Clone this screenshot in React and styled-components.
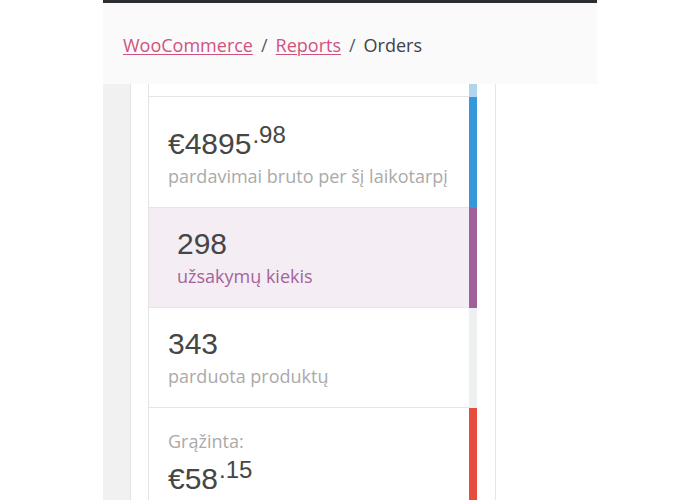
import styled, { createGlobalStyle } from 'styled-components';

const GlobalStyle = createGlobalStyle`
  body {
    margin: 0;
    background: #ffffff;
  }
`

const Page = styled.div`
  width: 700px;
  height: 500px;
  overflow: hidden;
  display: flex;
  padding-left: 103px;
  box-sizing: border-box;
`

const Frame = styled.div`
  width: 494px;
  display: flex;
  flex-direction: column;
`

const TopBar = styled.div`
  flex-shrink: 0;
  height: 3px;
  background: #2a2e32;
`

const Header = styled.div`
  flex-shrink: 0;
  height: 81px;
  box-sizing: border-box;
  padding: 30px 0 0 20px;
  background: #fafafa;
  font-family: "Open Sans", "Noto Sans", sans-serif;
  font-size: 18px;
  line-height: 24px;
  color: #555d66;
`

const Crumb = styled.a`
  color: #d1527f;
  text-decoration: underline;
  text-underline-offset: 2px;
  text-decoration-thickness: 1px;
`

const Sep = styled.span`
  margin: 0 8px;
`

const Current = styled.span`
  color: #3c4248;
`

const Body = styled.div`
  flex: 1;
  min-height: 0;
  display: flex;
  overflow: hidden;
`

const Sidebar = styled.div`
  width: 27px;
  background: #f1f1f1;
  border-right: 1px solid #e2e2e2;
`

const Content = styled.div`
  flex: 1;
  padding-left: 17px;
  background: #ffffff;
`

const Card = styled.ul`
  width: 348px;
  margin: 0;
  padding: 0 18px 0 0;
  list-style: none;
  box-sizing: border-box;
  min-height: 100%;
  border-left: 1px solid #e4e4e4;
  border-right: 1px solid #e6e6e6;
`

const Row = styled.li`
  display: flex;
`

const Item = styled.div`
  flex: 1;
  height: ${p => p.$height || 'auto'};
  padding: ${p => (p.$empty ? '0' : p.$wide ? '21px 0 19px 28px' : '21px 0 19px 19px')};
  background: ${p => (p.$active ? '#f4edf4' : '#ffffff')};
  border-bottom: 1px solid #e5e5e5;
`

const Bar = styled.div`
  width: 8px;
  background: ${p => p.$color};
`

const Amount = styled.div`
  font-family: "Liberation Sans", Arial, sans-serif;
  font-size: 30px;
  line-height: 30px;
  color: #464646;
  margin-bottom: ${p => (p.$gap ? '5px' : '0')};
`

const Cents = styled.span`
  font-size: 24px;
  line-height: 34px;
  vertical-align: 11px;
  margin-left: 1px;
`

const Label = styled.div`
  font-family: "Open Sans", "Noto Sans", sans-serif;
  font-size: 18px;
  line-height: 24px;
  margin-top: ${p => (p.$first ? '0' : '5px')};
  color: ${p => (p.$active ? '#a4649a' : '#aaaaaa')};
`

const App = () => {
  return (
    <>
      <GlobalStyle />
      <Page>
        <Frame>
          <TopBar />
          <Header>
            <Crumb href="#">WooCommerce</Crumb>
            <Sep>/</Sep>
            <Crumb href="#">Reports</Crumb>
            <Sep>/</Sep>
            <Current>Orders</Current>
          </Header>
          <Body>
            <Sidebar />
            <Content>
              <Card>
                <Row>
                  <Item $empty $height="12px" />
                  <Bar $color="#b1d5ef" />
                </Row>
                <Row>
                  <Item>
                    <Amount $gap>€4895<Cents>.98</Cents></Amount>
                    <Label>pardavimai bruto per šį laikotarpį</Label>
                  </Item>
                  <Bar $color="#3498db" />
                </Row>
                <Row>
                  <Item $active $wide>
                    <Amount>298</Amount>
                    <Label $active>užsakymų kiekis</Label>
                  </Item>
                  <Bar $color="#a0619a" />
                </Row>
                <Row>
                  <Item>
                    <Amount>343</Amount>
                    <Label>parduota produktų</Label>
                  </Item>
                  <Bar $color="#ecf0f1" />
                </Row>
                <Row>
                  <Item>
                    <Label $first>Grąžinta:</Label>
                    <Amount>€58<Cents>.15</Cents></Amount>
                  </Item>
                  <Bar $color="#e74c3c" />
                </Row>
              </Card>
            </Content>
          </Body>
        </Frame>
      </Page>
    </>
  )
}

export default App;
